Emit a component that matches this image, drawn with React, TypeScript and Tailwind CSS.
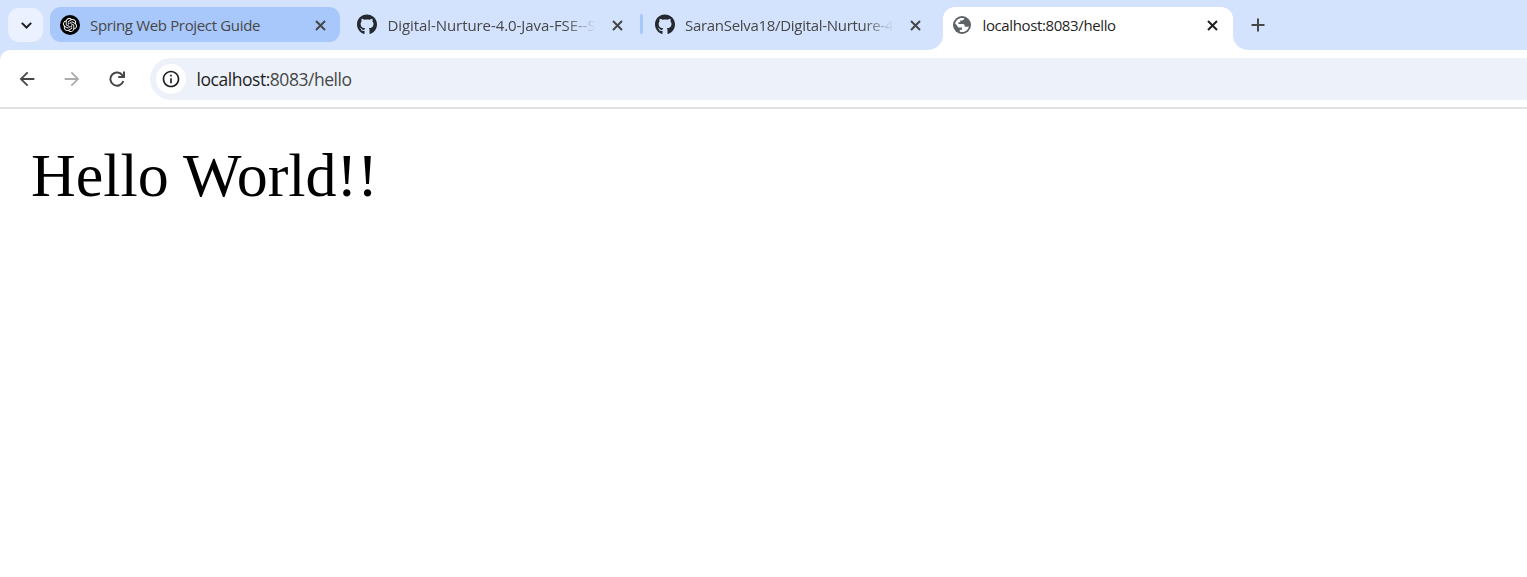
import React from "react";
import { SiOpenai } from "react-icons/si";
import { FaGithub } from "react-icons/fa";
import { MdArrowBack, MdArrowForward, MdInfoOutline } from "react-icons/md";

const Close = () => (
  <svg className="h-[11px] w-[11px] shrink-0" viewBox="0 0 11 11" fill="none" stroke="currentColor" strokeWidth="2">
    <path d="M1 1 10 10M10 1 1 10" />
  </svg>
);

const Globe = () => (
  <svg className="h-[18px] w-[18px]" viewBox="0 0 18 18">
    <circle cx="9" cy="9" r="9" fill="#5f6368" />
    <path
      fill="#fff"
      d="M11.2 2.3 C11.2 3.6 10.3 4.4 9 4.4 H7.2 V6.2 H5.4 V8 H9.8 C11 8 11.7 8.8 11.7 9.8 V10.7 H14.6 C15.2 10.7 15.6 10.4 15.9 10 C15.4 13.6 12.6 16.1 9 16.1 C8.3 16.1 7.5 16 6.8 15.8 V13.8 H9 V11.6 H6.3 C5.2 11.6 4.5 11 4.5 9.9 L2.1 7.5 C2.8 4.3 5.6 1.9 9 1.9 C9.8 1.9 10.5 2 11.2 2.3 Z"
    />
  </svg>
);

const Reload = ({ className }: { className?: string }) => (
  <svg className={"h-[16px] w-[16px] " + className} viewBox="0 0 16 16" fill="none" stroke="currentColor" strokeWidth="2">
    <path d="M13.6 4.6 A6.6 6.6 0 1 0 14.3 10M15 .5V6H9.2M14.4 5.4 11.6 2.6" />
  </svg>
);

type TabProps = { icon: React.ReactNode; title: string; fade?: boolean; titleClass: string };

const TabContent = ({ icon, title, fade, titleClass }: TabProps) => (
  <>
    <span className="flex h-5 w-5 shrink-0 items-center justify-center">{icon}</span>
    <span
      className={
        "ml-[10px] w-[209px] shrink-0 whitespace-nowrap text-[15px] leading-[22px] " +
        titleClass +
        (fade ? " [mask-image:linear-gradient(to_right,black_85%,transparent)]" : "")
      }
    >
      {title}
    </span>
    <span className="ml-[15.5px] flex pt-px">
      <Close />
    </span>
  </>
);

export default function App() {
  return (
    <div className="h-[577px] w-full overflow-hidden bg-white font-['Open_Sans','Noto_Sans',sans-serif]">
      <header className="flex h-[50px] items-start bg-[#d3e2fd] text-[#474747]">
        <button className="ml-2 mt-2 flex h-[34px] w-[35px] items-center justify-center rounded-[11px] bg-[#ebf1fe] pl-px text-[#1f1f1f]">
          <svg className="h-[7px] w-[11px]" viewBox="0 0 11 7" fill="none" stroke="currentColor" strokeWidth="2">
            <path d="M.8 .9 5.5 5.5 10.2 .9" />
          </svg>
        </button>
        <div className="ml-[7px] mt-[7px] flex h-[35px] w-[290px] items-center rounded-[11px] bg-[#a8c7fa] pl-[10px]">
          <TabContent
            icon={
              <span className="flex h-5 w-5 items-center justify-center rounded-full bg-black text-white">
                <SiOpenai size={14} />
              </span>
            }
            title="Spring Web Project Guide"
            titleClass="tracking-[-0.34px]"
          />
        </div>
        <div className="ml-[7px] mt-[7px] flex h-[35px] w-[291px] items-center pl-[10px]">
          <TabContent
            icon={<FaGithub size={21} color="#24292f" />}
            title="Digital-Nurture-4.0-Java-FSE--S"
            titleClass="pl-[0.5px] tracking-[-0.08px]"
            fade
          />
        </div>
        <div className="ml-[2px] mt-[14px] h-5 w-[3px] rounded-full bg-[#a8c7fa]" />
        <div className="ml-[2px] mt-[7px] flex h-[35px] w-[290px] items-center pl-[10px]">
          <TabContent
            icon={<FaGithub size={21} color="#24292f" />}
            title="SaranSelva18/Digital-Nurture-4."
            titleClass="tracking-[-0.3px]"
            fade
          />
        </div>
        <div className="-ml-[8px] h-[50px] w-4 bg-white">
          <div className="h-[50px] rounded-br-[15px] bg-[#d3e2fd]" />
        </div>
        <div className="mt-[7px] flex h-[43px] w-[290px] items-center rounded-t-[12px] bg-white pb-2 pl-[9px] text-[#1f1f1f]">
          <TabContent icon={<Globe />} title="localhost:8083/hello" titleClass="pl-[0.5px] tracking-[-0.38px]" />
        </div>
        <div className="h-[50px] w-4 bg-white">
          <div className="h-[50px] rounded-bl-[15px] bg-[#d3e2fd]" />
        </div>
        <svg className="ml-[2px] mt-[18px] h-[14px] w-[14px]" viewBox="0 0 14 14" stroke="currentColor" strokeWidth="2">
          <path d="M7 .5V13.5M.5 7H13.5" />
        </svg>
      </header>
      <div className="bg-[#d3e2fd]">
        <nav className="flex h-[59px] items-start rounded-tl-[10px] border-b-2 border-[#e1e1e1] bg-white pt-2">
          <div className="flex h-[41px] w-[150px] items-center pl-[16px] text-[#474747]">
            <MdArrowBack size={22} />
            <MdArrowForward size={22} className="ml-[23px] text-[#acacac]" />
            <Reload className="ml-[26px]" />
          </div>
          <div className="flex h-[42px] flex-1 items-center rounded-l-full bg-[#ecf1fa] pl-[6px]">
            <span className="flex h-[30px] w-[30px] items-center justify-center rounded-full bg-white text-[#1f1f1f]">
              <MdInfoOutline size={20} />
            </span>
            <span className="ml-[10.5px] whitespace-nowrap text-[17.5px] leading-6 tracking-[-0.46px] text-[#474747]">
              <span className="text-[#1f1f1f]">localhost:</span>8083/hello
            </span>
          </div>
        </nav>
      </div>
      <main className="pl-[31px] pt-[30px]">
        <p className="font-['Liberation_Serif',serif] text-[62px] leading-[72px] text-black">Hello World!!</p>
      </main>
    </div>
  );
}
